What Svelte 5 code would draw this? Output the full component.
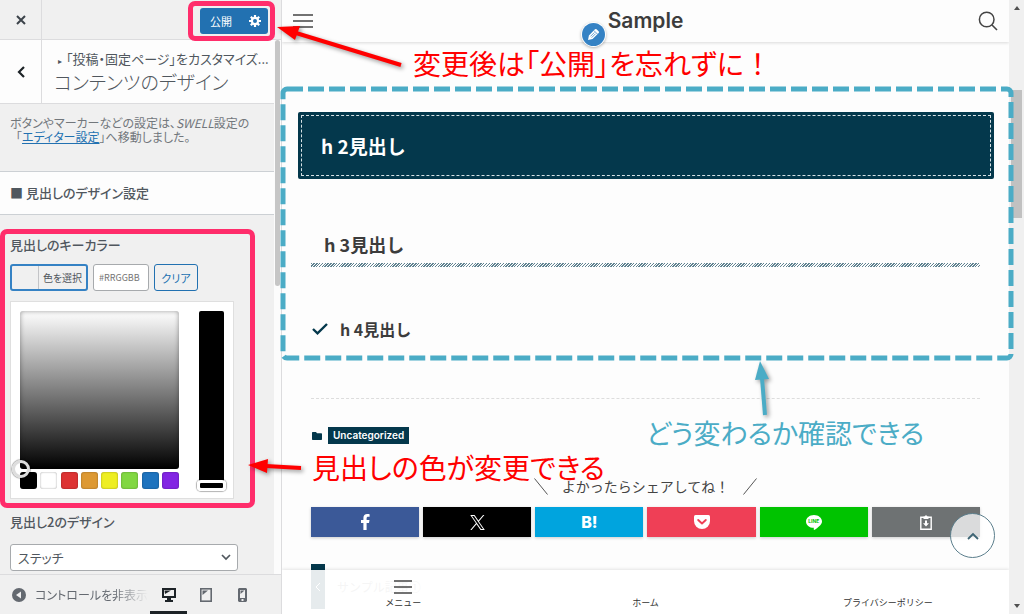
<script lang="ts">
	interface Share {
		name: string;
		color: string;
	}

	const palette = [
		"#000000",
		"#ffffff",
		"#dd3333",
		"#dd9933",
		"#eeee22",
		"#81d742",
		"#1e73be",
		"#8224e3",
	];

	const shares: Share[] = [
		{ name: "Facebook", color: "#3b5998" },
		{ name: "X", color: "#000000" },
		{ name: "Hatena", color: "#00a4de" },
		{ name: "Pocket", color: "#ef3f56" },
		{ name: "LINE", color: "#00c300" },
		{ name: "Copy", color: "#6e7273" },
	];

	let hex = "";
	let design = "stitch";
	let device = "desktop";

	const pick = (color: string) => {
		hex = color;
	};
</script>

<div class="customizer">
	<aside class="sidebar">
		<header class="topbar">
			<button class="close" aria-label="閉じる">
				<svg width="10" height="10" viewBox="0 0 10 10">
					<path d="M1 1L9 9M9 1L1 9" stroke="#3c434a" stroke-width="2" />
				</svg>
			</button>
			<div class="publish">
				<button class="save">公開</button>
				<button class="gear" aria-label="公開設定">
					<svg width="12" height="12" viewBox="0 0 12 12">
						<circle cx="6" cy="6" r="3.1" fill="none" stroke="#fff" stroke-width="2.2" />
						<path
							d="M6 0V2.4M6 9.6V12M0 6H2.4M9.6 6H12M1.8 1.8L3.4 3.4M8.6 8.6L10.2 10.2M10.2 1.8L8.6 3.4M3.4 8.6L1.8 10.2"
							stroke="#fff"
							stroke-width="2.2"
						/>
					</svg>
				</button>
			</div>
		</header>

		<div class="scroller">
			<div class="panel">
				<div class="section-title">
					<button class="back" aria-label="戻る">
						<svg width="8" height="12" viewBox="0 0 8 12">
							<path d="M7 1L2 6L7 11" fill="none" stroke="#1d2327" stroke-width="2.2" />
						</svg>
					</button>
					<h3>
						<span><i>▸</i>「投稿・固定ページ」をカスタマイズ...</span>
						コンテンツのデザイン
					</h3>
				</div>

				<p class="notice">
					ボタンやマーカーなどの設定は、<em>SWELL</em>設定の<br /><span class="full">「</span><a
						href="#editor">エディター設定</a
					>」へ移動しました。
				</p>

				<h4 class="group">■ 見出しのデザイン設定</h4>

				<div class="controls">
					<label class="title" for="hex">見出しのキーカラー</label>
					<div class="color-row">
						<button class="choose"><span>色を選択</span></button>
						<input id="hex" type="text" placeholder="#RRGGBB" bind:value={hex} />
						<button class="clear" on:click={() => pick("")}>クリア</button>
					</div>

					<div class="picker">
						<div class="picker-main">
							<div class="square"><span class="handle"></span></div>
							<div class="palette">
								{#each palette as color}
									<button
										aria-label={color}
										style="background-color: {color}"
										on:click={() => pick(color)}
									></button>
								{/each}
							</div>
						</div>
						<div class="strip"><span class="slider"></span></div>
					</div>

					<label class="title" for="design">見出し2のデザイン</label>
					<div class="select">
						<select id="design" bind:value={design}>
							<option value="stitch">ステッチ</option>
						</select>
						<svg width="10" height="7" viewBox="0 0 10 7">
							<path d="M1 1L5 5L9 1" fill="none" stroke="#50575e" stroke-width="1.7" />
						</svg>
					</div>
				</div>
			</div>
			<div class="track"><span></span></div>
		</div>

		<footer>
			<button class="collapse">
				<svg width="14" height="14" viewBox="0 0 14 14">
					<circle cx="7" cy="7" r="7" fill="#646970" />
					<path d="M9 3.5V10.5L4 7Z" fill="#f0f0f1" />
				</svg>
				<span>コントロールを非表示</span>
			</button>
			<div class="devices">
				<button
					class:active={device === "desktop"}
					aria-label="デスクトップ"
					on:click={() => (device = "desktop")}
				>
					<svg width="14" height="14" viewBox="0 0 14 14">
						<path
							fill-rule="evenodd"
							d="M0 0H14V10H9V12H11V14H3V12H5V10H0ZM2 2V8H12V2Z"
							fill="#1d2327"
						/>
						<path d="M2.5 2.5H9L3 6Z" fill="#1d2327" />
					</svg>
				</button>
				<button
					class:active={device === "tablet"}
					aria-label="タブレット"
					on:click={() => (device = "tablet")}
				>
					<svg width="12" height="14" viewBox="0 0 12 14">
						<rect x="0.8" y="0.8" width="10.4" height="12.4" fill="none" stroke="#646970" stroke-width="1.6" />
						<path d="M2.5 2.5H8L2.5 7Z" fill="#646970" />
					</svg>
				</button>
				<button
					class:active={device === "mobile"}
					aria-label="モバイル"
					on:click={() => (device = "mobile")}
				>
					<svg width="9" height="14" viewBox="0 0 9 14">
						<path
							fill-rule="evenodd"
							d="M1 0H8L9 1V13L8 14H1L0 13V1ZM2 2V10H7V2ZM3.5 11V13H5.5V11Z"
							fill="#646970"
						/>
						<path d="M2.5 2.5H6.5L2.5 6Z" fill="#646970" />
					</svg>
				</button>
			</div>
		</footer>
	</aside>

	<main class="preview">
		<div class="page">
			<header class="site-header">
				<button aria-label="メニュー">
					<svg width="20" height="14" viewBox="0 0 20 14">
						<path d="M0 1H20M0 7H20M0 13H20" stroke="#444" stroke-width="1.3" />
					</svg>
				</button>
				<div class="site-name">
					<a href="#top">Sample</a>
					<button class="edit" aria-label="編集">
						<svg width="14" height="14" viewBox="0 0 14 14">
							<g transform="rotate(45 7 7)">
								<path d="M4.4 1.6Q4.4 0.4 5.4 0.4H8.6Q9.6 0.4 9.6 1.6V10.2L7 14L4.4 10.2Z" fill="#fff" />
								<path d="M4.4 3.2H9.6M6.2 4.2V9.8M7.9 4.2V9.8" stroke="#3582c4" stroke-width="0.7" />
							</g>
						</svg>
					</button>
				</div>
				<button aria-label="検索">
					<svg width="20" height="20" viewBox="0 0 20 20">
						<circle cx="8.7" cy="8.5" r="7.3" fill="none" stroke="#444" stroke-width="1.5" />
						<path d="M14 14L19 19" stroke="#444" stroke-width="1.6" />
					</svg>
				</button>
			</header>

			<article>
				<h2><span>h 2見出し</span></h2>
				<h3>h 3見出し</h3>
				<h4>
					<svg width="16" height="12" viewBox="0 0 16 12">
						<path d="M1 6L5.5 10.3L15 1" fill="none" stroke="#04384c" stroke-width="2.4" />
					</svg>
					h 4見出し
				</h4>

				<div class="meta">
					<svg width="10" height="8" viewBox="0 0 10 8">
						<path d="M0 0.7Q0 0 0.7 0H4L5 1.2H9.3Q10 1.2 10 2V7.3Q10 8 9.3 8H0.7Q0 8 0 7.3Z" fill="#04384c" />
					</svg>
					<a href="#uncategorized">Uncategorized</a>
				</div>

				<p class="share-title">
					<svg width="14" height="17" viewBox="0 0 14 17">
						<path d="M0.5 0.5L13.5 16.5" stroke="#555" />
					</svg>
					よかったらシェアしてね！
					<svg width="14" height="17" viewBox="0 0 14 17">
						<path d="M13.5 0.5L0.5 16.5" stroke="#555" />
					</svg>
				</p>
				<div class="shares">
					{#each shares as share}
						<button aria-label={share.name} style="background-color: {share.color}">
							{#if share.name === "Facebook"}
								<svg width="9" height="16" viewBox="0 0 9 16">
									<path
										d="M2.4 16V9H0V6.1H2.4V4C2.4 1.5 3.8 0 6.2 0C7.4 0 8.6 0.2 8.6 0.2V2.8H7.3C6 2.8 5.6 3.5 5.6 4.3V6.1H8.5L8 9H5.6V16Z"
										fill="#fff"
									/>
								</svg>
							{:else if share.name === "X"}
								<svg width="15" height="15" viewBox="0 0 24 24">
									<path
										d="M14.3 10.2L23 0H20.9L13.4 8.8L7.3 0H0.4L9.5 13.3L0.4 24H2.5L10.4 14.7L16.8 24H23.7ZM3.2 1.6H6.4L20.9 22.5H17.7Z"
										fill="#fff"
									/>
								</svg>
							{:else if share.name === "Hatena"}
								<b>B!</b>
							{:else if share.name === "Pocket"}
								<svg width="16" height="14" viewBox="0 0 16 14">
									<path d="M1.5 0H14.5Q16 0 16 1.5V6A8 8 0 0 1 0 6V1.5Q0 0 1.5 0Z" fill="#fff" />
									<path d="M4.2 5L8 8.5L11.8 5" fill="none" stroke="#ef3f56" stroke-width="1.9" stroke-linecap="round" stroke-linejoin="round" />
								</svg>
							{:else if share.name === "LINE"}
								<span class="line">
									<svg width="16" height="15" viewBox="0 0 16 15">
										<path d="M8 0C12.4 0 16 2.9 16 6.4C16 9.5 12 12.5 8.2 15Q7.5 15 7.8 12.8C3.3 12.8 0 9.9 0 6.4C0 2.9 3.6 0 8 0Z" fill="#fff" />
									</svg>
									<small>LINE</small>
								</span>
							{:else}
								<svg width="12" height="15" viewBox="0 0 12 15">
									<path d="M0.8 2.3H11.2V14.2H0.8Z" fill="none" stroke="#fff" stroke-width="1.4" />
									<path d="M3.5 1.5H4.7Q6 -0.8 7.3 1.5H8.5V4H3.5Z" fill="#fff" />
									<path d="M5 5.5H7V8.3H9L6 11.5L3 8.3H5Z" fill="#fff" />
								</svg>
							{/if}
						</button>
					{/each}
				</div>

				<div class="prev-post">
					<span>
						<svg width="6" height="10" viewBox="0 0 6 10">
							<path d="M5 1L1 5L5 9" fill="none" stroke="#fff" />
						</svg>
					</span>
					サンプル記事①
				</div>
			</article>

			<button class="to-top" aria-label="トップへ">
				<svg width="12" height="8" viewBox="0 0 12 8">
					<path d="M1 7L6 2L11 7" fill="none" stroke="#3d6474" stroke-width="1.8" />
				</svg>
			</button>

			<nav>
				<a href="#menu">
					<svg width="18" height="14" viewBox="0 0 18 14">
						<path d="M0 1H18M0 7H18M0 13H18" stroke="#444" stroke-width="1.5" />
					</svg>
					メニュー
				</a>
				<a href="#home">ホーム</a>
				<a href="#privacy">プライバシーポリシー</a>
			</nav>
		</div>

		<div class="window-scroll">
			<svg width="6" height="4" viewBox="0 0 6 4"><path d="M0 4L3 0L6 4Z" fill="#505050" /></svg>
			<span></span>
			<svg width="6" height="4" viewBox="0 0 6 4"><path d="M0 0L3 4L6 0Z" fill="#505050" /></svg>
		</div>
	</main>

	<!-- callouts drawn over the screen -->
	<div class="callouts">
		<div class="frame publish-frame"></div>
		<div class="frame color-frame"></div>
		<svg class="dashed">
			<rect />
		</svg>
		<svg class="arrows">
			<path d="M401 65L296 33" stroke="#f00" stroke-width="4" />
			<path d="M277 27L300 26L295 40Z" fill="#f00" />
			<path d="M301 468L266 466" stroke="#f00" stroke-width="4" />
			<path d="M248 465L268 459L267 473Z" fill="#f00" />
			<path d="M765 415L762 378" stroke="#4bacc6" stroke-width="4" />
			<path d="M760 361L769 379L755 380Z" fill="#4bacc6" />
		</svg>
		<p class="note remember">変更後は「公開」を忘れずに<span class="full">！</span></p>
		<p class="note color">見出しの色が変更できる</p>
		<p class="note check">どう変わるか確認できる</p>
	</div>
</div>

<style>
	:global(body) {
		margin: 0;
		overflow: hidden;
	}

	.customizer {
		position: relative;
		display: flex;
		height: 100vh;
		overflow: hidden;
		font-family: "Noto Sans CJK JP", sans-serif;
		font-size: 12px;
		color: #50575e;
	}

	.customizer * {
		box-sizing: border-box;
	}

	button,
	input,
	select {
		margin: 0;
		padding: 0;
		border: 0;
		background: none;
		font: inherit;
		color: inherit;
	}

	button {
		display: flex;
		align-items: center;
		justify-content: center;
		cursor: pointer;
	}

	h2,
	h3,
	h4,
	p {
		margin: 0;
	}

	svg {
		flex: none;
	}

	.full {
		font-feature-settings: normal;
	}

	.sidebar {
		display: flex;
		flex-direction: column;
		flex: none;
		width: 282px;
		background: #f0f0f0;
		border-right: 1px solid #dcdcde;
		font-feature-settings: "palt";
	}

	.topbar {
		display: flex;
		justify-content: space-between;
		align-items: center;
		flex: none;
		height: 40px;
		padding-right: 13px;
		border-bottom: 1px solid #dcdcde;
	}

	.close,
	.back {
		flex: none;
		align-self: stretch;
		width: 42px;
		border-right: 1px solid #dcdcde;
	}

	.publish {
		display: flex;
		height: 26px;
		margin-top: 3px;
		border-radius: 3px;
		background: #2271b1;
		color: #fff;
	}

	.save {
		width: 42px;
		font-size: 11px;
	}

	.gear {
		width: 26px;
	}

	.scroller {
		display: flex;
		flex: 1;
		min-height: 0;
	}

	.panel {
		flex: 1;
		min-width: 0;
		overflow: hidden;
	}

	.track {
		width: 7px;
		padding: 0 1px;
		background: #fcfcfc;
	}

	.track span {
		display: block;
		height: 46%;
		border-radius: 3px;
		background: #c6c6c6;
	}

	.section-title {
		display: flex;
		height: 64px;
		background: #fdfdfd;
		border-bottom: 1px solid #dcdcde;
	}

	.section-title h3 {
		padding: 10px 0 0 12px;
		font-size: 19px;
		font-weight: 300;
		line-height: 24px;
		white-space: nowrap;
	}

	.section-title h3 span {
		display: block;
		font-size: 13px;
		font-weight: 400;
		line-height: 18px;
	}

	.section-title i {
		display: inline-block;
		width: 12px;
		font-size: 8px;
		font-style: normal;
		text-align: center;
	}

	.notice {
		height: 67px;
		padding: 12px 10px;
		line-height: 14px;
		white-space: nowrap;
		color: #72777c;
	}

	.notice a {
		color: #2271b1;
	}

	.group {
		height: 44px;
		padding-left: 10px;
		background: #fdfdfd;
		border-top: 1px solid #ccd0d4;
		border-bottom: 1px solid #ccd0d4;
		font-size: 13px;
		font-weight: 500;
		line-height: 42px;
	}

	.controls {
		padding: 20px 10px 0;
	}

	.title {
		display: block;
		font-size: 13px;
		font-weight: 500;
		line-height: 20px;
	}

	.color-row {
		display: flex;
		gap: 5px;
		height: 27px;
		margin: 9px 0 10px;
		font-size: 11px;
	}

	.choose {
		width: 78px;
		padding-left: 26px;
		border: 2px solid #3582c4;
		border-radius: 3px;
	}

	.choose span {
		flex: 1;
		height: 100%;
		border-left: 1px solid #c3c4c7;
		font-size: 10px;
		line-height: 23px;
	}

	#hex {
		width: 56px;
		padding: 0 5px;
		border: 1px solid #a7aaad;
		border-radius: 3px;
		background: #fff;
		font-size: 9px;
	}

	.clear {
		width: 44px;
		border: 1px solid #2271b1;
		border-radius: 3px;
		color: #2271b1;
	}

	.picker {
		display: flex;
		gap: 20px;
		width: 224px;
		height: 198px;
		padding: 9px;
		background: #fff;
		border: 1px solid #dfdfdf;
	}

	.square {
		position: relative;
		width: 159px;
		height: 158px;
		border-radius: 3px;
		background: linear-gradient(#fff, #000);
		box-shadow: inset 0 0 5px rgba(0, 0, 0, 0.4);
	}

	.handle {
		position: absolute;
		left: -8px;
		bottom: -9px;
		width: 18px;
		height: 18px;
		border: 3px solid #ddd;
		border-radius: 50%;
		box-shadow: 0 0 1px 1px rgba(0, 0, 0, 0.3);
	}

	.palette {
		display: flex;
		justify-content: space-between;
		margin-top: 3px;
	}

	.palette button {
		width: 17px;
		height: 17px;
		border-radius: 3px;
		box-shadow: inset 0 0 2px rgba(0, 0, 0, 0.4);
	}

	.strip {
		position: relative;
		width: 25px;
		height: 178px;
		border-radius: 2px;
		background: #000;
	}

	.slider {
		position: absolute;
		left: -2px;
		right: -2px;
		bottom: -2px;
		height: 11px;
		border: 3px solid #fff;
		border-radius: 4px;
		box-shadow: 0 0 1px 1px rgba(0, 0, 0, 0.3);
	}

	.picker + .title {
		margin-top: 13px;
	}

	.select {
		position: relative;
		width: 228px;
		margin-top: 12px;
	}

	.select select {
		display: block;
		width: 100%;
		height: 27px;
		padding: 0 24px 0 7px;
		border: 1px solid #a7aaad;
		border-radius: 3px;
		background: #fff;
		appearance: none;
		font-size: 13px;
	}

	.select svg {
		position: absolute;
		top: 10px;
		right: 7px;
	}

	footer {
		display: flex;
		justify-content: space-between;
		flex: none;
		height: 40px;
		padding: 0 20px 0 12px;
		border-top: 1px solid #dcdcde;
	}

	.collapse {
		gap: 9px;
		width: 136px;
		justify-content: flex-start;
		overflow: hidden;
		white-space: nowrap;
		color: #646970;
		mask-image: linear-gradient(90deg, #000 75%, transparent);
	}

	.devices {
		display: flex;
	}

	.devices button {
		width: 37px;
		padding-top: 3px;
		border-bottom: 3px solid transparent;
	}

	.devices .active {
		border-color: #1d2327;
	}

	.preview {
		display: flex;
		flex: 1;
		min-width: 0;
		background: #fdfdfd;
		color: #333;
	}

	.page {
		position: relative;
		flex: 1;
		min-width: 0;
		overflow: hidden;
	}

	.site-header {
		display: flex;
		align-items: center;
		justify-content: space-between;
		height: 42px;
		padding: 0 11px;
		box-shadow: 0 1px 3px rgba(0, 0, 0, 0.14);
	}

	.site-name {
		position: relative;
	}

	.site-name a {
		font-family: Inter, sans-serif;
		font-size: 21px;
		font-weight: 600;
		line-height: 42px;
		text-decoration: none;
		color: #3c3c3c;
	}

	.edit {
		position: absolute;
		left: -26px;
		top: 23px;
		width: 23px;
		height: 23px;
		border-radius: 50%;
		background: #3582c4;
		box-shadow: 0 0 0 1px #fff, 0 1px 3px 1px rgba(0, 0, 0, 0.3);
	}

	article {
		padding: 70px 29px 0;
	}

	h2 {
		margin: 0 -14px 0 -13px;
		padding: 3px;
		border-radius: 2px;
		background: #04384c;
		color: #fff;
		font-size: 19px;
		line-height: 59px;
	}

	h2 span {
		display: block;
		padding-left: 19px;
		border: 1px dashed #d5e0e4;
	}

	article h3 {
		margin-top: 49px;
		padding: 0 13px 4px;
		color: #3c3c3c;
		font-size: 18px;
		line-height: 32px;
	}

	/* hatched rule under the heading */
	article h3::after {
		content: "";
		display: block;
		height: 4px;
		margin: 3px -13px -8px;
		background: repeating-linear-gradient(
			135deg,
			#5f8290 0 1px,
			transparent 1px 2px
		);
	}

	article h4 {
		display: flex;
		align-items: center;
		gap: 12px;
		margin-top: 54px;
		padding: 0 0 57px 1px;
		border-bottom: 1px dashed #ddd;
		color: #3c3c3c;
		font-size: 16px;
		line-height: 24px;
	}

	.meta {
		display: flex;
		align-items: center;
		gap: 6px;
		margin: 28px 0 0 1px;
	}

	.meta a {
		padding: 0 5px;
		background: #04384c;
		color: #fff;
		font-family: Inter, sans-serif;
		font-size: 10px;
		font-weight: 600;
		line-height: 17px;
		text-decoration: none;
	}

	.share-title {
		display: flex;
		align-items: center;
		justify-content: center;
		gap: 14px;
		margin-top: 32px;
		font-size: 14px;
		line-height: 20px;
		color: #444;
	}

	.shares {
		display: grid;
		grid-template-columns: repeat(6, 1fr);
		gap: 4px;
		margin-top: 11px;
	}

	.shares button {
		height: 30px;
		box-shadow: 0 1px 3px rgba(0, 0, 0, 0.2);
		color: #fff;
	}

	.shares b {
		font-family: Inter, sans-serif;
		font-size: 16px;
		font-weight: 800;
	}

	.line {
		position: relative;
		display: flex;
	}

	.line small {
		position: absolute;
		inset: 0;
		font-family: Inter, sans-serif;
		font-size: 5px;
		font-weight: 700;
		line-height: 13px;
		color: #00c300;
	}

	.prev-post {
		display: flex;
		align-items: center;
		gap: 12px;
		height: 45px;
		margin-top: 27px;
		color: #999;
	}

	.prev-post span {
		display: flex;
		align-items: center;
		justify-content: center;
		align-self: stretch;
		width: 14px;
		background: #04384c;
	}

	.to-top {
		position: absolute;
		right: 14px;
		bottom: 56px;
		width: 45px;
		height: 45px;
		border: 1px solid #5b7e8c;
		border-radius: 50%;
		background: rgba(255, 255, 255, 0.75);
	}

	nav {
		position: absolute;
		left: 0;
		right: 0;
		bottom: 0;
		display: flex;
		height: 44px;
		background: rgba(255, 255, 255, 0.9);
		box-shadow: 0 -1px 3px rgba(0, 0, 0, 0.1);
	}

	nav a {
		display: flex;
		flex: 1;
		flex-direction: column;
		align-items: center;
		justify-content: flex-end;
		gap: 2px;
		padding-bottom: 5px;
		color: #333;
		font-size: 9px;
		line-height: 13px;
		text-decoration: none;
	}

	.window-scroll {
		display: flex;
		flex-direction: column;
		align-items: center;
		flex: none;
		width: 15px;
		padding: 6px 0;
		background: #f0f0f0;
	}

	.window-scroll span {
		width: 11px;
		height: 128px;
		margin: 80px 0 auto;
		background: #c1c1c1;
	}

	.callouts {
		position: absolute;
		inset: 0;
		pointer-events: none;
	}

	.frame {
		position: absolute;
		border: 5px solid #ff2d6b;
		border-radius: 7px;
	}

	.publish-frame {
		left: 188px;
		top: 1px;
		width: 87px;
		height: 40px;
	}

	.color-frame {
		left: 0;
		top: 229px;
		width: 255px;
		height: 279px;
	}

	.dashed {
		position: absolute;
		left: 280px;
		top: 86px;
		width: calc(100% - 290px);
		height: 275px;
	}

	.dashed rect {
		x: 3px;
		y: 3px;
		width: calc(100% - 6px);
		height: calc(100% - 6px);
		rx: 4px;
		fill: none;
		stroke: #4bacc6;
		stroke-width: 5px;
		stroke-dasharray: 16 5;
	}

	.arrows {
		position: absolute;
		width: 100%;
		height: 100%;
		filter: drop-shadow(2px 2px 2px rgba(0, 0, 0, 0.4));
	}

	.note {
		position: absolute;
		font-size: 28px;
		font-feature-settings: "palt";
		line-height: 34px;
		white-space: nowrap;
		color: #f00;
	}

	.remember {
		left: 413px;
		top: 46px;
	}

	.color {
		left: 312px;
		top: 450px;
	}

	.check {
		left: 646px;
		top: 416px;
		color: #4bacc6;
		font-size: 27px;
	}
</style>
